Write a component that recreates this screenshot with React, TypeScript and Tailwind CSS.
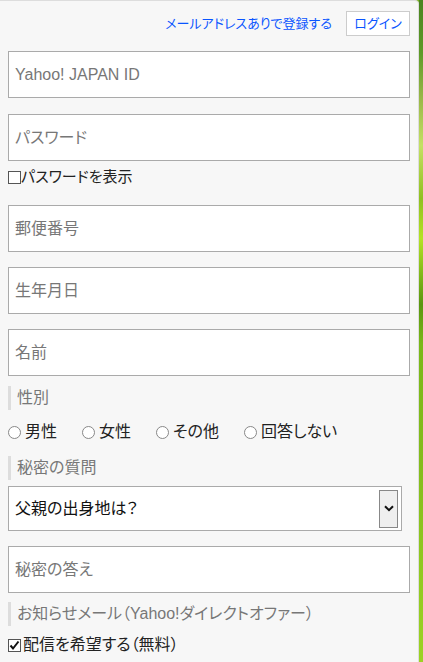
import { ReactNode } from "react";

const font = "font-['Liberation_Sans','Noto_Sans_CJK_JP',sans-serif] [font-feature-settings:'palt']";

function TextField({ placeholder }: { placeholder: string }) {
  return (
    <input
      type="text"
      placeholder={placeholder}
      className={`block w-full h-[47px] border border-[#aaaaaa] bg-white px-[6px] text-[16px] text-[#222] placeholder:text-[#777] outline-none ${font}`}
    />
  );
}

function SectionLabel({ children }: { children: ReactNode }) {
  return (
    <div className="flex items-center h-[24px] border-l-[3px] border-[#dddddd] pl-[6px] text-[16px] text-[#777] leading-none">
      {children}
    </div>
  );
}

function Box({ checked = false }: { checked?: boolean }) {
  return (
    <span className="relative inline-block w-[13px] h-[13px] border border-[#555] bg-white shrink-0">
      {checked && (
        <svg viewBox="0 0 13 13" className="absolute -left-px -top-px w-[13px] h-[13px]">
          <path d="M2.5 6.5 L5 9.5 L10.5 2.5" fill="none" stroke="#111" strokeWidth="2" />
        </svg>
      )}
    </span>
  );
}

function Radio({ label }: { label: string }) {
  return (
    <label className="flex items-center gap-[4px]">
      <span className="inline-block w-[13px] h-[13px] rounded-full border border-[#888] bg-white shrink-0" />
      <span>{label}</span>
    </label>
  );
}

export default function App() {
  return (
    <div className={`flex w-[423px] h-[662px] overflow-hidden bg-[#7ab020] ${font}`}>
      <div className="flex-1 bg-[#f7f7f7] border-t border-r border-[#dddddd] rounded-tr-[4px] pt-[10px] px-[8px]">
        <div className="flex justify-end items-center gap-[14px] h-[25px]">
          <a href="#" className="text-[13px] text-[#0a55ff] leading-none">
            メールアドレスありで登録する
          </a>
          <button className="h-[25px] w-[64px] border border-[#cccccc] bg-white text-[13px] text-[#0a55ff] leading-none">
            ログイン
          </button>
        </div>

        <div className="mt-[15px]">
          <TextField placeholder="Yahoo! JAPAN ID" />
        </div>
        <div className="mt-[16px]">
          <TextField placeholder="パスワード" />
        </div>
        <label className="mt-[6px] flex items-center h-[20px] text-[15px] text-[#222]">
          <Box />
          <span>パスワードを表示</span>
        </label>

        <div className="mt-[18px]">
          <TextField placeholder="郵便番号" />
        </div>
        <div className="mt-[15px]">
          <TextField placeholder="生年月日" />
        </div>
        <div className="mt-[15px]">
          <TextField placeholder="名前" />
        </div>

        <div className="mt-[10px]">
          <SectionLabel>性別</SectionLabel>
        </div>
        <div className="mt-[12px] flex items-center gap-[25px] h-[20px] text-[16px] text-[#222]">
          <Radio label="男性" />
          <Radio label="女性" />
          <Radio label="その他" />
          <Radio label="回答しない" />
        </div>

        <div className="mt-[14px]">
          <SectionLabel>秘密の質問</SectionLabel>
        </div>
        <div className="mt-[6px] flex items-center w-[394px] h-[45px] border border-[#aaaaaa] bg-white pl-[6px] pr-[3px]">
          <span className="flex-1 text-[16px] text-[#111]">父親の出身地は？</span>
          <span className="flex items-center justify-center w-[19px] h-[38px] border border-[#888] bg-[#efefef]">
            <svg viewBox="0 0 10 7" className="w-[10px] h-[7px]">
              <path d="M1 1.2 L5 5.2 L9 1.2" fill="none" stroke="#111" strokeWidth="2" />
            </svg>
          </span>
        </div>

        <div className="mt-[15px]">
          <TextField placeholder="秘密の答え" />
        </div>

        <div className="mt-[9px]">
          <SectionLabel>お知らせメール（Yahoo!ダイレクトオファー）</SectionLabel>
        </div>
        <label className="mt-[9px] flex items-center h-[20px] text-[16px] text-[#222]">
          <Box checked />
          <span className="ml-[2px]">配信を希望する（無料）</span>
        </label>
      </div>
      <div className="w-[4px] h-full bg-[linear-gradient(to_bottom,#4a8420_0%,#5e9a28_8%,#9ab848_15%,#c4e064_22%,#90c020_30%,#b4e224_36%,#7cb418_42%,#5a9610_46%,#7ab818_52%,#84bc1c_70%,#90c820_85%,#9cd224_100%)]" />
    </div>
  );
}
